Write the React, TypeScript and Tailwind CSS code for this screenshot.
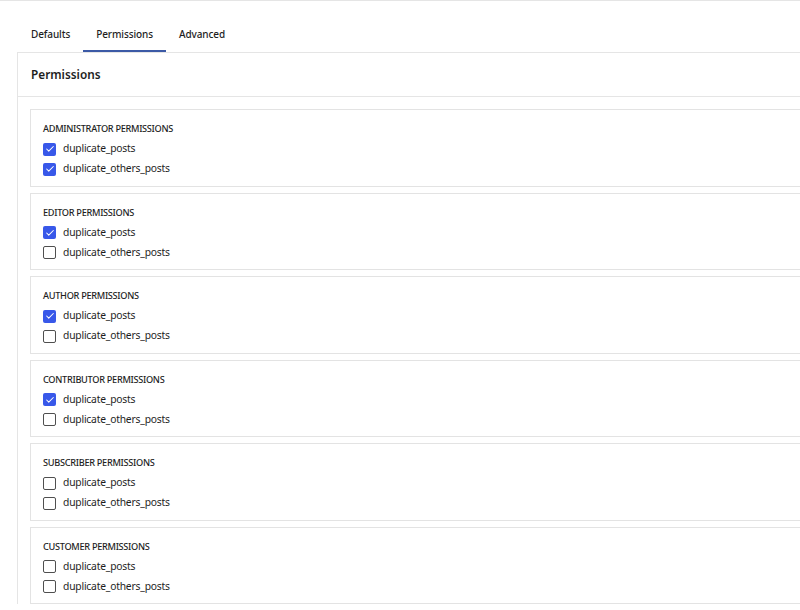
import { Check } from 'lucide-react'

interface RoleGroup {
  label: string
  posts: boolean
  others: boolean
}

const ROLES: RoleGroup[] = [
  { label: 'Administrator Permissions', posts: true, others: true },
  { label: 'Editor Permissions', posts: true, others: false },
  { label: 'Author Permissions', posts: true, others: false },
  { label: 'Contributor Permissions', posts: true, others: false },
  { label: 'Subscriber Permissions', posts: false, others: false },
  { label: 'Customer Permissions', posts: false, others: false }
]

const TABS = ['Defaults', 'Permissions', 'Advanced']

function Box({ checked }: { checked: boolean }) {
  return checked ? (
    <span className="flex h-[13px] w-[13px] items-center justify-center rounded-[2px] bg-[#3858e9]">
      <Check className="h-[10px] w-[10px] text-white" strokeWidth={2.5} />
    </span>
  ) : (
    <span className="h-[13px] w-[13px] rounded-[2px] border border-[#4f4f4f]" />
  )
}

function Row({ name, checked }: { name: string; checked: boolean }) {
  return (
    <label className="flex h-5 items-center gap-[7px]">
      <Box checked={checked} />
      <span className="text-[10.3px] tracking-[-0.2px] text-[#1e1e1e]">{name}</span>
    </label>
  )
}

export default function App() {
  return (
    <div
      className="h-[610px] w-[800px] overflow-hidden border-t border-[#e5e5e5] bg-white"
      style={{ fontFamily: '"Noto Sans", "Open Sans", sans-serif' }}
    >
      <div className="w-[840px] pl-[17px]">
        {/* tabs */}
        <div className="flex h-[51px] pl-px">
          {TABS.map((tab) => (
            <div
              key={tab}
              className={
                tab === 'Permissions'
                  ? 'flex items-center border-b-2 border-[#3c5aa6] px-[13px] pt-[17px] text-[10px] font-medium tracking-[-0.1px] text-[#1e1e1e]'
                  : 'flex items-center border-b-2 border-transparent px-[13px] pt-[17px] text-[10px] font-medium tracking-[-0.1px] text-[#1e1e1e]'
              }
            >
              {tab}
            </div>
          ))}
        </div>

        {/* panel */}
        <div className="border-l border-t border-[#e5e5e5]">
          <div className="flex h-[44px] items-center border-b border-[#e5e5e5] px-[13px] pt-px">
            <h2 className="text-[11.8px] font-semibold text-[#1e1e1e]">Permissions</h2>
          </div>
          <div className="flex flex-col gap-[6px] pl-[12px] pt-[12px]">
            {ROLES.map((role) => (
              <div key={role.label} className="h-[77.5px] border border-[#e3e3e3] px-[12px] pt-[11px]">
                <p className="mb-[2px] text-[9.2px] font-medium uppercase leading-[16px] tracking-[-0.3px] text-[#1e1e1e]">
                  {role.label}
                </p>
                <Row name="duplicate_posts" checked={role.posts} />
                <Row name="duplicate_others_posts" checked={role.others} />
              </div>
            ))}
          </div>
        </div>
      </div>
    </div>
  )
}
